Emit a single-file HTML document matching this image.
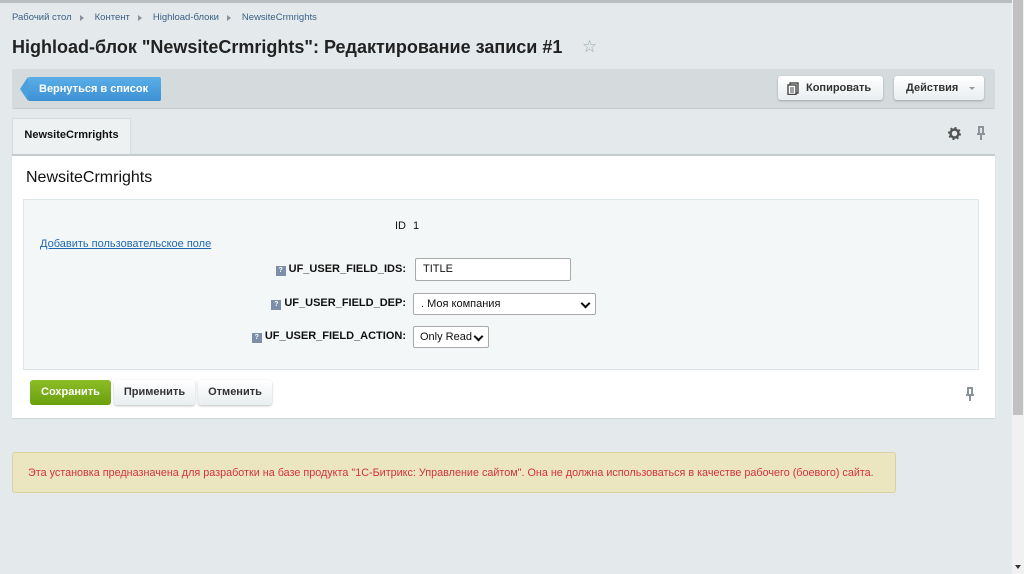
<!DOCTYPE html>
<html><head><meta charset="utf-8"><style>
*{box-sizing:border-box}
body{margin:0;width:1024px;height:574px;background:#e4eaec;font-family:"Liberation Sans",Arial,sans-serif;position:relative;overflow:hidden}
.top{position:absolute;left:0;top:0;width:1012px;height:3px;background:#b9bfc1}
.sb{position:absolute;left:1012px;top:0;width:12px;height:574px;background:#f1f1f1}
.sb i{position:absolute;left:1px;top:0;width:10px;height:415px;background:#c1c1c1}
.sb b{position:absolute;left:3px;top:565px;border:3px solid transparent;border-top:4px solid #333;border-bottom:0}
.bc{position:absolute;top:12px;left:12px;font-size:9.5px;color:#3a5f86}
.bc span{margin-right:23px;position:relative}
.bc span:not(:last-child):after{content:"";position:absolute;right:-15px;top:3px;border:3px solid transparent;border-left:4px solid #8a9298}
h1{position:absolute;left:12px;top:37px;margin:0;font-size:18px;font-weight:bold;color:#222}
.star{position:absolute;left:582px;top:37px;font-size:17px;color:#9aa}
.bar{position:absolute;left:12px;top:69px;width:983px;height:40px;background:#d5dadc;border-bottom:1px solid #c5cbce;border-radius:2px}
.back{position:absolute;left:28px;top:77px;width:133px;height:24px;background:linear-gradient(#5aaee8,#3d91d4);color:#fff;font-size:11px;font-weight:bold;line-height:24px;padding-left:11px;border-radius:2px}
.back:before{content:"";position:absolute;left:-8px;top:0;border:12px solid transparent;border-right:8px solid #4aa0de;border-left:0}
.btn{position:absolute;height:24px;background:linear-gradient(#fff,#e9eef0);border-radius:3px;box-shadow:0 1px 2px rgba(0,0,0,.25);font-size:11px;font-weight:bold;color:#333;line-height:24px}
.tab{position:absolute;left:12px;top:118px;width:119px;height:38px;background:#eef1f2;border:1px solid #d6dcde;border-bottom:0;font-size:11px;font-weight:bold;line-height:32px;text-align:center;color:#111}
.panel{position:absolute;left:12px;top:154px;width:983px;height:264px;background:#fff;border-top:2px solid #c5ccd0;box-shadow:0 1px 1px #cfd6d9}
.ph{position:absolute;left:14px;top:13px;font-size:16px;color:#111}
.form{position:absolute;left:11px;top:43px;width:956px;height:171px;background:#f4f7f8;border:1px solid #dfe6e9}
.lbl{position:absolute;font-size:11px;font-weight:bold;color:#111;text-align:right}
.q{display:inline-block;width:10px;height:10px;background:#7c8ea8;color:#fff;font-size:7px;line-height:10px;text-align:center;margin-right:3px;vertical-align:0}
.inp{position:absolute;background:#fff;border:1px solid #a9a9a9;border-radius:2px;font-size:11px;color:#111;padding-left:7px}
.sel:after{content:"";position:absolute;right:6px;top:6px;width:5px;height:5px;border-right:2px solid #111;border-bottom:2px solid #111;transform:rotate(45deg)}
.save{position:absolute;left:30px;top:380px;width:81px;height:25px;background:linear-gradient(#8cbd25,#6a9f0f);border-radius:3px;color:#fff;font-size:11px;font-weight:bold;line-height:25px;text-align:center}
.warn{position:absolute;left:12px;top:452px;width:884px;height:41px;background:#ebe6c0;border:1px solid #d9d2a4;border-radius:3px;font-size:10.8px;color:#d3323f;line-height:40px;padding-left:15px;white-space:nowrap}
</style></head><body>
<div class="top"></div>
<div class="sb"><i></i><b></b></div>
<div class="bc"><span>Рабочий стол</span><span>Контент</span><span>Highload-блоки</span><span>NewsiteCrmrights</span></div>
<h1>Highload-блок "NewsiteCrmrights": Редактирование записи #1</h1>
<div class="star">☆</div>
<div class="bar"></div>
<div class="back">Вернуться в список</div>
<div class="btn" style="left:778px;top:76px;width:105px;padding-left:28px">Копировать
<svg style="position:absolute;left:9px;top:6px" width="12" height="13" viewBox="0 0 12 13"><rect x="3" y="1" width="8" height="10" fill="none" stroke="#444" stroke-width="1.4"/><rect x="1" y="3" width="8" height="9.5" fill="#fff" stroke="#444" stroke-width="1.4"/><path d="M3 6h4M3 8h4M3 10h4" stroke="#444"/></svg></div>
<div class="btn" style="left:894px;top:76px;width:90px;padding-left:12px">Действия<span style="position:absolute;right:9px;top:11px;border:3px solid transparent;border-top:3px solid #999"></span></div>
<div class="tab">NewsiteCrmrights</div>
<svg style="position:absolute;left:948px;top:127px" width="13" height="13" viewBox="0 0 13 13"><circle cx="6.5" cy="6.5" r="4" fill="none" stroke="#555" stroke-width="2.5"/><circle cx="6.5" cy="6.5" r="5.5" fill="none" stroke="#555" stroke-width="2" stroke-dasharray="2 2.3"/></svg>
<svg style="position:absolute;left:976px;top:126px" width="10" height="15" viewBox="0 0 10 15"><path d="M2 1h6M3 1v6M7 1v6M1 8h8M5 8v6" stroke="#8a9498" stroke-width="2" fill="none"/></svg>
<div class="panel">
<div class="ph">NewsiteCrmrights</div>
<div class="form">
<div class="lbl" style="left:0;width:382px;top:20px;font-weight:normal">ID</div>
<div style="position:absolute;left:389px;top:20px;font-size:11px;color:#111">1</div>
<div style="position:absolute;left:16px;top:38px;font-size:11px;color:#2067b0;text-decoration:underline">Добавить пользовательское поле</div>
<div class="lbl" style="right:572px;top:63px"><span class="q">?</span>UF_USER_FIELD_IDS:</div>
<div class="inp" style="left:391px;top:58px;width:156px;height:23px;line-height:21px">TITLE</div>
<div class="lbl" style="right:572px;top:97px"><span class="q">?</span>UF_USER_FIELD_DEP:</div>
<div class="inp sel" style="left:389px;top:93px;width:183px;height:22px;line-height:20px">. Моя компания</div>
<div class="lbl" style="right:572px;top:130px"><span class="q">?</span>UF_USER_FIELD_ACTION:</div>
<div class="inp sel" style="left:389px;top:126px;width:76px;height:22px;line-height:20px;padding-left:6px">Only Read</div>
</div>
</div>
<div class="save">Сохранить</div>
<div class="btn" style="left:114px;top:380px;width:81px;height:25px;text-align:center">Применить</div>
<div class="btn" style="left:198px;top:380px;width:74px;height:25px;text-align:center">Отменить</div>
<svg style="position:absolute;left:965px;top:387px" width="10" height="15" viewBox="0 0 10 15"><path d="M2 1h6M3 1v6M7 1v6M1 8h8M5 8v6" stroke="#8a9498" stroke-width="2" fill="none"/></svg>
<div class="warn">Эта установка предназначена для разработки на базе продукта "1С-Битрикс: Управление сайтом". Она не должна использоваться в качестве рабочего (боевого) сайта.</div>
</body></html>
